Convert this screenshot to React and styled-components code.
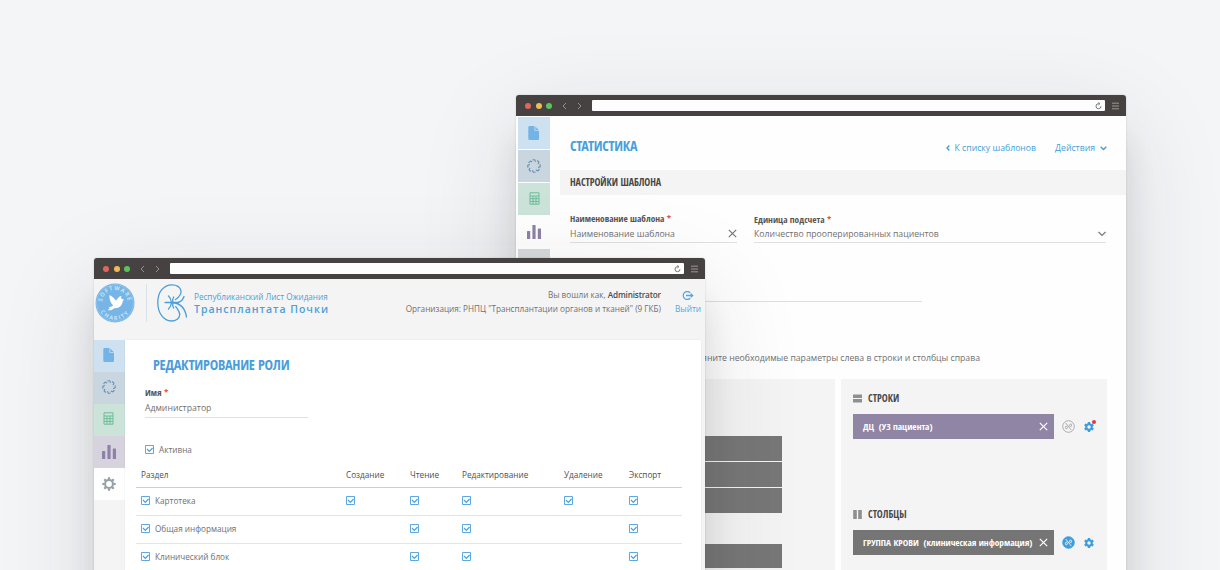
import React from 'react';
import styled, { createGlobalStyle, css } from 'styled-components';

const Global = createGlobalStyle`
  *{box-sizing:border-box}
  html,body{margin:0;height:100%;overflow:hidden}
  body{font-family:'Open Sans','Noto Sans',sans-serif;color:#707070;background:#f4f5f7}
`;

const Desktop = styled.main`
  position: relative;
  width: 1220px;
  height: 570px;
  overflow: hidden;
  background: #f4f5f7;
`;

const Window = styled.section`
  position: absolute;
  left: ${p => p.$x}px;
  top: ${p => p.$y}px;
  width: ${p => p.$w}px;
  height: 700px;
  border-radius: 3px 3px 0 0;
  background: ${p => p.$bg};
  box-shadow: 0 0 2px rgba(40, 40, 44, 0.2), 0 40px 32px -4px rgba(40, 40, 44, 0.14), 0 30px 100px rgba(40, 40, 44, 0.13);
`;

const TitleBar = styled.header`
  height: 21px;
  display: flex;
  align-items: center;
  padding: 0 7px 0 9px;
  background: #454241;
  border-radius: 3px 3px 0 0;
`;

const Dot = styled.i`
  width: 6px;
  height: 6px;
  margin-right: 4.7px;
  border-radius: 50%;
  background: ${p => p.$c};
`;

const Nav = styled.svg`
  margin: 0 10px 0 ${p => p.$ml || 0}px;
`;

const Address = styled.div`
  flex: 1;
  height: 11px;
  display: flex;
  align-items: center;
  justify-content: flex-end;
  padding-right: 3px;
  margin-right: 7px;
  background: #fdfdfd;
  border-radius: 1px;
`;

const condensed = css`
  font-family: 'Open Sans Condensed', 'Open Sans', 'Noto Sans', sans-serif;
  font-stretch: 75%;
  font-weight: 700;
`;

const Chrome = () => (
  <TitleBar>
    <Dot $c="#e0655c" /><Dot $c="#f2b955" /><Dot $c="#5cc35a" />
    <Nav $ml={5} width="5" height="8" viewBox="0 0 5 8" fill="none" stroke="#96918f"><path d="M4 1 1 4l3 3" /></Nav>
    <Nav width="5" height="8" viewBox="0 0 5 8" fill="none" stroke="#96918f"><path d="m1 1 3 3-3 3" /></Nav>
    <Address>
      <svg width="7" height="8" viewBox="0 0 7 8" fill="none" stroke="#666" strokeWidth=".9"><path d="M4.3 1.7H3.4A2.5 2.5 0 1 0 6 4.2M3.4.3l1.5 1.4-1.5 1.4" /></svg>
    </Address>
    <svg width="7" height="8" viewBox="0 0 7 8" stroke="#9b9795"><path d="M0 1.2h7M0 4h7M0 6.8h7" /></svg>
  </TitleBar>
);

const Columns = styled.div`
  display: flex;
  align-items: stretch;
`;

const Rail = styled.nav`
  width: ${p => p.$w}px;
  flex: none;
  display: flex;
  flex-direction: column;
  gap: ${p => p.$gap || 0}px;
  margin: ${p => p.$m || 0};
`;

const RailItem = styled.div`
  height: 32px;
  display: flex;
  align-items: center;
  justify-content: center;
  padding-right: ${p => p.$pr || 0}px;
  padding-bottom: ${p => p.$pb || 0}px;
  background: ${p => p.$bg};
`;

const FileIcon = () => (
  <svg width="12" height="14" viewBox="0 0 12 14"><path fill="#74b3e6" d="M1.5 0h5v4.800H11v7.700c0 .8-.4 1.500-1.200 1.500H1.500C.7 14 .3 13.300.3 12.500v-11C.3.7.7 0 1.500 0Z" /><path fill="#74b3e6" d="m7.300.6 3.400 3.400H7.300Z" /></svg>
);

const teeth = [0, 45, 90, 135, 180, 225, 270, 315];

const RingIcon = () => (
  <svg width="14" height="14" viewBox="0 0 14 14" fill="none" stroke="#6c93b4">
    {teeth.map(a => (
      <path key={a} strokeWidth="1.200" d="M5.400 1A6.200 6.200 0 0 1 7.700.800L8.600 2.800" transform={`rotate(${a} 7 7)`} />
    ))}
  </svg>
);

const CalcIcon = () => (
  <svg width="11" height="13" viewBox="0 0 11 13" fill="none" stroke="#6cbd99">
    <path d="M1 .8h9v11.400H1zM1 4h9M1 6.700h9M1 9.400h9M4 4v8M7 4v8" />
  </svg>
);

const BarsIcon = () => (
  <svg width="14" height="14" viewBox="0 0 14 14" fill="#8e82a8"><rect x="0" y="6" width="3.200" height="8" rx=".6" /><rect x="5.400" y="0" width="3.200" height="14" rx=".6" /><rect x="10.800" y="3.500" width="3.200" height="10.500" rx=".6" /></svg>
);

const CogIcon = () => (
  <svg width="14" height="14" viewBox="0 0 14 14">
    <circle cx="7" cy="7" r="3.900" fill="none" stroke="#96a0a6" strokeWidth="2" />
    {teeth.map(a => <path key={a} fill="#96a0a6" d="M5.700 2.600 6 .3h2l.3 2.300z" transform={`rotate(${a} 7 7)`} />)}
  </svg>
);

const GearIcon = () => (
  <svg width="10" height="10" viewBox="0 0 10 10">
    <circle cx="5" cy="5" r="2.700" fill="none" stroke="#3f9ddd" strokeWidth="2" />
    {[0, 60, 120, 180, 240, 300].map(a => <path key={a} fill="#3f9ddd" d="M3.600 2 3.900.1h2.200L6.400 2z" transform={`rotate(${a} 5 5)`} />)}
  </svg>
);

/* statistics window */

const StatBody = styled.div`
  flex: 1;
  display: flex;
  flex-direction: column;
  padding-left: 10px;
`;

const StatHead = styled.div`
  height: 54px;
  display: flex;
  align-items: center;
  padding: 7px 19px 0 10px;
`;

const StatTitle = styled.h1`
  ${condensed}
  flex: 1;
  margin: 0;
  padding-bottom: 1px;
  font-size: 14px;
  line-height: 20px;
  letter-spacing: -0.25px;
  color: #46a0dc;
`;

const Link = styled.a`
  display: flex;
  align-items: center;
  gap: 5px;
  margin-left: 19px;
  padding-top: 3px;
  font-size: 8.7px;
  line-height: 14px;
  color: #459fd6;
  white-space: nowrap;
`;

const SectionBar = styled.h2`
  ${condensed}
  height: 25px;
  margin: 0;
  padding-left: 10px;
  font-size: 10px;
  line-height: 24px;
  letter-spacing: -0.06px;
  color: #464646;
  background: #f4f4f4;
`;

const Fields = styled.div`
  display: flex;
  gap: 17px;
  height: 106px;
  margin: 17px 20px 0 10px;
`;

const Field = styled.div`
  width: ${p => p.$w}px;
  padding-top: ${p => p.$pt || 0}px;
`;

const Label = styled.div`
  ${condensed}
  font-size: 9.3px;
  line-height: 14px;
  color: #555;
  b { color: #e2513f; }
`;

const Value = styled.div`
  display: flex;
  align-items: center;
  justify-content: space-between;
  height: ${p => p.$h}px;
  padding-bottom: ${p => p.$pb}px;
  border-bottom: 1px solid #e0e0e0;
  font-size: 8.7px;
  line-height: 14px;
  white-space: nowrap;
`;

const Divider = styled.hr`
  width: 352px;
  height: 1px;
  margin: -17px 0 0 10px;
  border: 0;
  background: #dedede;
`;

const Hint = styled.p`
  margin: 49px 146px 0 0;
  font-size: 8.7px;
  line-height: 14px;
  text-align: right;
`;

const Boards = styled.div`
  display: flex;
  gap: 6px;
  margin: 14px 19px 0 10px;
`;

const Board = styled.div`
  flex: ${p => (p.$w ? 'none' : 1)};
  width: ${p => (p.$w ? p.$w + 'px' : 'auto')};
  height: 300px;
  padding: ${p => p.$pad};
  background: #f4f4f4;
`;

const Block = styled.div`
  height: 24.5px;
  margin: 0 0 ${p => p.$mb || 1.5}px;
  background: #777;
`;

const GroupTitle = styled.h3`
  ${condensed}
  display: flex;
  align-items: center;
  gap: 6px;
  height: 14px;
  margin: 0 0 9px;
  font-size: 10px;
  color: #484848;
`;

const ChipRow = styled.div`
  display: flex;
  align-items: center;
  height: 25px;
  margin-bottom: 68px;
`;

const Chip = styled.div`
  ${condensed}
  width: 200.5px;
  height: 25px;
  display: flex;
  align-items: center;
  justify-content: space-between;
  margin-right: 8.5px;
  padding: 0 6px 1px 10px;
  font-size: 9.3px;
  white-space: pre;
  color: #fff;
  background: ${p => p.$bg};
`;

const GearSlot = styled.span`
  position: relative;
  display: flex;
  margin-left: 9px;
`;

const Badge = styled.i`
  position: absolute;
  top: -2px;
  right: -2px;
  width: 4px;
  height: 4px;
  border-radius: 50%;
  background: #e23b3b;
`;

const Close = ({ c }) => (
  <svg width="9" height="9" viewBox="0 0 9 9" stroke={c} strokeWidth="1.200"><path d="m.8.8 7.400 7.400M8.200.8.8 8.200" /></svg>
);

const Percent = ({ on }) => (
  <svg width="13" height="13" viewBox="0 0 13 13" fill={on ? '#3f9ddd' : 'none'} stroke={on ? '#3f9ddd' : '#a5a5a5'} strokeWidth=".9">
    <circle cx="6.500" cy="6.500" r="5.800" />
    <g fill="none" stroke={on ? '#fff' : '#9a9a9a'} strokeWidth=".8"><path d="m3.700 3 5.600 7" /><ellipse cx="8.600" cy="5.300" rx="1" ry="1.300" /><ellipse cx="4.400" cy="7.500" rx="1" ry="1.300" /></g>
  </svg>
);

const StatWindow = () => (
  <Window $x={516} $y={95} $w={610} $bg="#fefefe">
    <Chrome />
    <Columns>
      <Rail $w={32} $gap={1} $m="1px 0 0 2px">
        <RailItem $pb={1} $bg="#cde1f1"><FileIcon /></RailItem>
        <RailItem $pb={1} $bg="#c9d6df"><RingIcon /></RailItem>
        <RailItem $pb={1} $bg="#cbe3d9"><CalcIcon /></RailItem>
        <RailItem $bg="#fefefe"><BarsIcon /></RailItem>
        <RailItem $bg="#d5d9dc"><CogIcon /></RailItem>
      </Rail>
      <StatBody>
        <StatHead>
          <StatTitle>СТАТИСТИКА</StatTitle>
          <Link>
            <svg width="4" height="6" viewBox="0 0 4 6" fill="none" stroke="currentColor" strokeWidth="1.400"><path d="M3.400.5 1 3l2.400 2.500" /></svg>
            К списку шаблонов
          </Link>
          <Link>
            Действия
            <svg width="7" height="5" viewBox="0 0 7 5" fill="none" stroke="currentColor" strokeWidth="1.400"><path d="m.7.8 2.800 2.800L6.300.8" /></svg>
          </Link>
        </StatHead>
        <SectionBar>НАСТРОЙКИ ШАБЛОНА</SectionBar>
        <Fields>
          <Field $w={167}>
            <Label>Наименование шаблона <b>*</b></Label>
            <Value $h={17} $pb={1}>Наименование шаблона <Close c="#777" /></Value>
          </Field>
          <Field $w={352} $pt={1}>
            <Label>Единица подсчета <b>*</b></Label>
            <Value $h={16} $pb={1}>
              Количество прооперированных пациентов
              <svg width="8" height="6" viewBox="0 0 8 6" fill="none" stroke="#777" strokeWidth="1.200"><path d="m.5 1 3.500 3.500L7.500 1" /></svg>
            </Value>
          </Field>
        </Fields>
        <Divider />
        <Hint>яните необходимые параметры слева в строки и столбцы справа</Hint>
        <Boards>
          <Board $pad="57px 53px 0 60px">
            <Block /><Block /><Block $mb={31} /><Block /><Block />
          </Board>
          <Board $w={266} $pad="12px 0 0 12px">
            <GroupTitle>
              <svg width="9" height="9" viewBox="0 0 9 9" fill="#8f8f8f"><path d="M0 .5h9v3.500H0zM0 5h9v3.500H0z" /></svg>
              СТРОКИ
            </GroupTitle>
            <ChipRow>
              <Chip $bg="#9185a5">{'ДЦ  (УЗ пациента)'}<Close c="#fff" /></Chip>
              <Percent />
              <GearSlot><GearIcon /><Badge /></GearSlot>
            </ChipRow>
            <GroupTitle>
              <svg width="9" height="9" viewBox="0 0 9 9" fill="#8f8f8f"><path d="M.2 0h3.600v9H.2zM5.200 0h3.600v9H5.200z" /></svg>
              СТОЛБЦЫ
            </GroupTitle>
            <ChipRow>
              <Chip $bg="#757575">{'ГРУППА КРОВИ  (клиническая информация)'}<Close c="#fff" /></Chip>
              <Percent on />
              <GearSlot><GearIcon /></GearSlot>
            </ChipRow>
          </Board>
        </Boards>
      </StatBody>
    </Columns>
  </Window>
);

/* role editor window */

const AppHead = styled.div`
  height: 61px;
  display: flex;
  align-items: flex-start;
  padding: 4px 4px 0 1px;
`;

const Brand = styled.div`
  flex: 1;
  display: flex;
  align-items: center;
  height: 40px;
`;

const Sep = styled.i`
  width: 1px;
  height: 38px;
  margin: 0 10px 0 11px;
  background: #d9e2e9;
`;

const BrandText = styled.div`
  margin-left: 7px;
  padding-bottom: 1px;
  color: #4f9fd8;
  font-size: 8.15px;
  line-height: 13px;
  white-space: nowrap;
  strong {
    display: block;
    font-size: 10.5px;
    font-weight: 600;
    letter-spacing: 1px;
  }
`;

const UserInfo = styled.div`
  padding-top: 5px;
  font-size: 8.18px;
  line-height: 14px;
  text-align: right;
  white-space: nowrap;
  b { font-weight: 600; color: #4c4c4c; letter-spacing: -0.15px; }
`;

const Logout = styled.a`
  display: flex;
  flex-direction: column;
  align-items: center;
  width: 26px;
  margin-left: 14px;
  padding-top: 8px;
  gap: 2px;
  font-size: 8.3px;
  line-height: 14px;
  color: #5aa5dc;
`;

const Page = styled.div`
  flex: 1;
  height: 600px;
  margin-right: 4px;
  padding: 15px 19px 0 11px;
  background: #fff;
  box-shadow: 0 0 1px rgba(0, 0, 0, 0.15);
`;

const PageTitle = styled.h1`
  ${condensed}
  margin: 0 0 11px 17px;
  font-size: 14.3px;
  line-height: 20px;
  letter-spacing: -0.25px;
  color: #4a9ddb;
`;

const NameField = styled.div`
  width: 163px;
  margin: 0 0 24px 9px;
`;

const CheckRow = styled.div`
  display: flex;
  align-items: center;
  gap: 5px;
  height: 14px;
  padding-left: ${p => p.$pl || 0}px;
  font-size: 8.2px;
`;

const Table = styled.div`
  width: 546px;
  margin-top: 5px;
`;

const Row = styled.div`
  display: grid;
  grid-template-columns: 205px 64px 52px 102px 65px 1fr;
  align-items: center;
  height: ${p => (p.$head ? 27 : 28)}px;
  padding: ${p => (p.$head ? '0 0 0 5px' : '0 0 3px 5px')};
  border-bottom: 1px solid ${p => (p.$head ? '#cfcfcf' : '#e4e4e4')};
  font-size: 8.2px;
  color: ${p => (p.$head ? '#4f4f4f' : '#6f6f6f')};
`;

const Check = () => (
  <svg width="9" height="9" viewBox="0 0 9 9" fill="none" stroke="#4c9fdc"><path strokeWidth=".9" d="M.5.5h8v8h-8z" /><path strokeWidth="1.200" d="m2 4 2.300 2.300L7.600 3" /></svg>
);

const SoftwareSeal = () => (
  <svg width="40" height="40" viewBox="0 0 40 40">
    <defs>
      <path id="sealTop" d="M7 20a13 13 0 0 1 26 0" />
      <path id="sealBottom" d="M3 20a17 17 0 0 0 34 0" />
    </defs>
    <circle cx="20" cy="20" r="19.500" fill="#76b5e5" />
    <circle cx="20" cy="20" r="18.300" fill="none" stroke="#9fcbed" strokeWidth=".6" />
    <g fill="#d9ecf9" fontFamily="Open Sans, sans-serif" fontSize="5.600" fontWeight="600" textAnchor="middle">
      <text letterSpacing="1.100"><textPath href="#sealTop" startOffset="50%">SOFTWARE</textPath></text>
      <text letterSpacing="1.600"><textPath href="#sealBottom" startOffset="50%">CHARITY</textPath></text>
    </g>
    <path fill="#fff" d="M14.500 12c2.400 1 4.700 3 6.300 5.600 1-.5 1.600-1.300 2-2.300.7-1.300 2-2 3.800-2.300-.6 1-.6 1.800-.2 2.800.7-.3 1.400 0 1.800.6l1 .6-1.200.4c-.5 2.600-1.600 6.300-5 7.300-1.600.4-2.800.2-4 .8-1.400.7-1.900 1.500-3 1.700-1 .2-2-.3-3.200.2.4-1 1.300-1.700 2.600-2.100-.7-.2-1.400-.7-1.700-1.400 2 .3 3.500-.3 4.500-1.400-2.800-2.700-4.300-6.800-3.700-10.500Z" />
  </svg>
);

const KidneyLogo = () => (
  <svg width="30" height="38" viewBox="0 0 30 38" fill="none" stroke="#4a9fdb" strokeWidth="1.300" strokeLinecap="round">
    <path d="M18.500 15.500C22 13 24.500 10 24 6.800 23 2.800 19 .8 15 .8 6.500.8.8 8 .8 18.500.8 29 6.500 37 14.500 37c4.500 0 8-2.500 8.200-6.200.200-3.300-2-5.300-4-8.300" />
    <path d="M8 18.500h14M15 18.500c6 .5 13 4 14.500 14.500M21 18.500c3-.8 5-3 6-6M14.500 18.500c-.3-3-1.300-5-3-6.500M14.500 18.500c-.3 3-1.300 5-3 6.500M16 18.500c-.5-2-.3-4 .7-5.500M16 18.500c-.5 2-.3 4 .7 5.500" />
  </svg>
);

const rows = [
  ['Картотека', [1, 1, 1, 1, 1]],
  ['Общая информация', [0, 1, 1, 0, 1]],
  ['Клинический блок', [0, 1, 1, 0, 1]],
];

const RoleWindow = () => (
  <Window $x={94} $y={258} $w={611} $bg="#f4f4f4">
    <Chrome />
    <AppHead>
      <Brand>
        <SoftwareSeal />
        <Sep />
        <KidneyLogo />
        <BrandText>Республиканский Лист Ожидания<strong>Трансплантата Почки</strong></BrandText>
      </Brand>
      <UserInfo>Вы вошли как, <b>Administrator</b><br />Организация: РНПЦ "Трансплантации органов и тканей" (9 ГКБ)</UserInfo>
      <Logout>
        <svg width="12" height="9" viewBox="0 0 12 9" fill="none" stroke="currentColor" strokeWidth="1.300"><path d="M8.200 1.800A4 4 0 1 0 8.200 7.200M4 4.500h6.500M8.700 2.600l2 1.900-2 1.900" /></svg>
        Выйти
      </Logout>
    </AppHead>
    <Columns>
      <Rail $w={31}>
        <RailItem $pb={2} $pr={2} $bg="#cde1f1"><FileIcon /></RailItem>
        <RailItem $pb={2} $pr={2} $bg="#c9d6df"><RingIcon /></RailItem>
        <RailItem $pb={3} $pr={2} $bg="#cbe3d9"><CalcIcon /></RailItem>
        <RailItem $pr={2} $bg="#d6d2de"><BarsIcon /></RailItem>
        <RailItem $pr={2} $bg="#fefefe"><CogIcon /></RailItem>
      </Rail>
      <Page>
        <PageTitle>РЕДАКТИРОВАНИЕ РОЛИ</PageTitle>
        <NameField>
          <Label>Имя <b>*</b></Label>
          <Value $h={18} $pb={1}>Администратор</Value>
        </NameField>
        <CheckRow $pl={9}><Check />Активна</CheckRow>
        <Table>
          <Row $head><span>Раздел</span><span>Создание</span><span>Чтение</span><span>Редактирование</span><span>Удаление</span><span>Экспорт</span></Row>
          {rows.map(([name, flags]) => (
            <Row key={name}>
              <CheckRow><Check />{name}</CheckRow>
              {flags.map((f, i) => <CheckRow key={i}>{f ? <Check /> : null}</CheckRow>)}
            </Row>
          ))}
        </Table>
      </Page>
    </Columns>
  </Window>
);

export default function App() {
  return (
    <>
      <Global />
      <Desktop>
        <StatWindow />
        <RoleWindow />
      </Desktop>
    </>
  );
}
